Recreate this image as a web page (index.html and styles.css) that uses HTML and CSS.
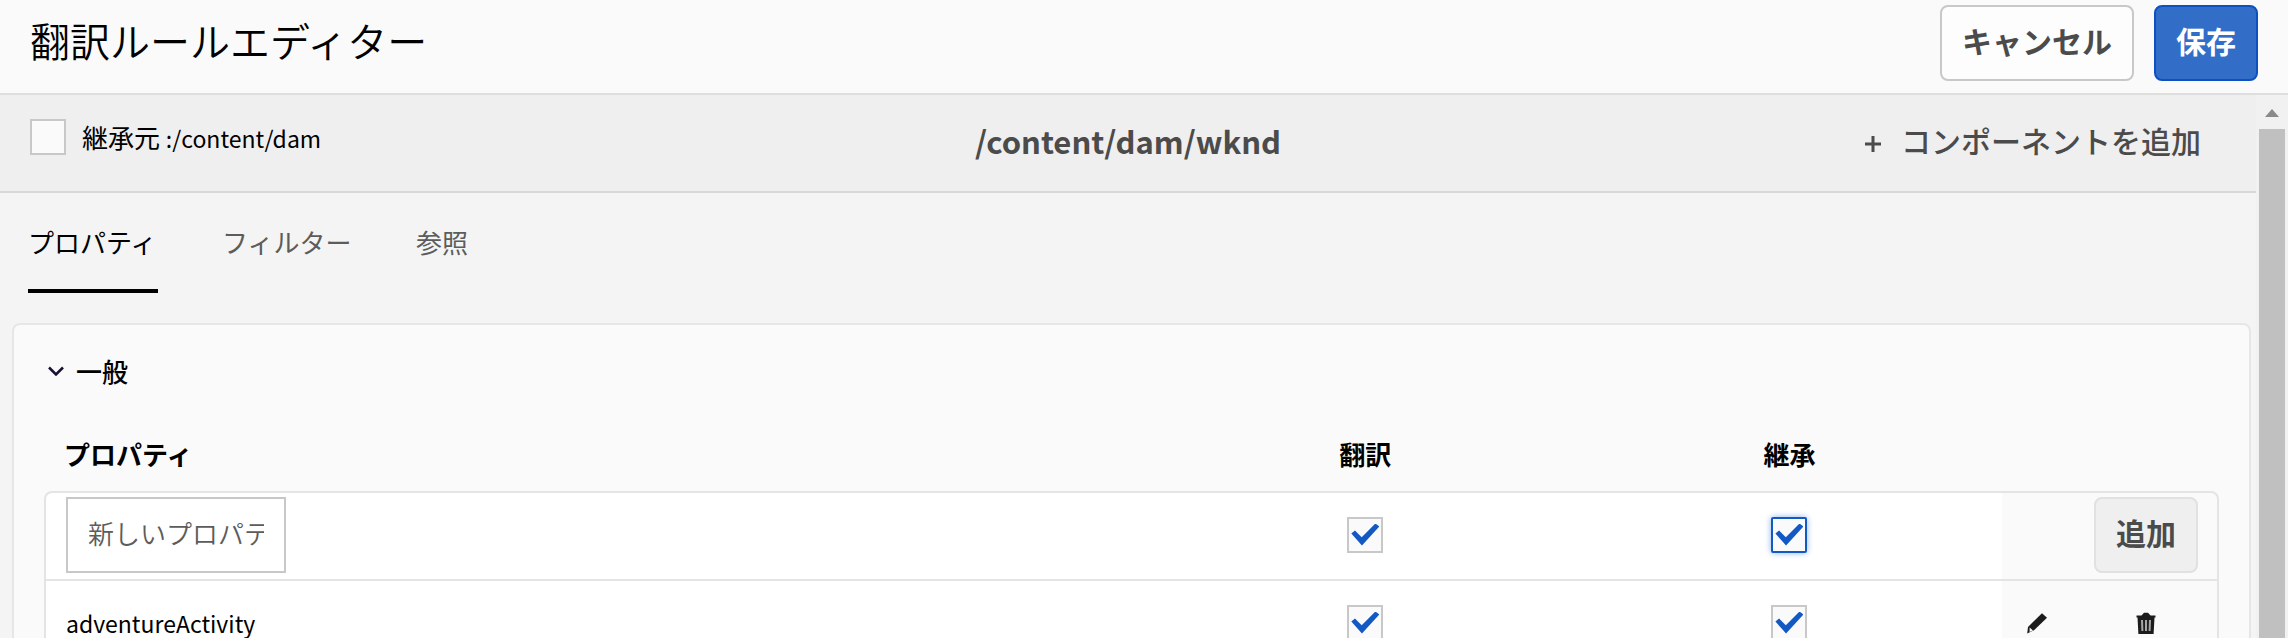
FILE: index.html
```
<!DOCTYPE html>
<html lang="ja">
<head>
<meta charset="utf-8">
<title>翻訳ルールエディター</title>
<link rel="stylesheet" href="styles.css">
</head>
<body>
<header class="topbar">
  <h1 class="title">翻訳ルールエディター</h1>
  <div class="actions">
    <button class="btn" type="button">キャンセル</button>
    <button class="btn btn-primary" type="button">保存</button>
  </div>
</header>
<div class="viewport">
  <main class="content">
    <div class="contextbar">
      <label class="inherit"><input class="check" type="checkbox"><span>継承元 <span class="latin">:/content/dam</span></span></label>
      <h2 class="path">/content/dam/wknd</h2>
      <button class="add-component" type="button">
        <svg class="plus" viewBox="0 0 16 16" aria-hidden="true"><path d="M8 0v16M0 8h16"/></svg>
        <span>コンポーネントを追加</span>
      </button>
    </div>
    <nav class="tabs">
      <a class="tab tab-active" href="#properties">プロパティ</a>
      <a class="tab" href="#filters">フィルター</a>
      <a class="tab" href="#references">参照</a>
    </nav>
    <section class="panel" id="properties">
      <button class="section-toggle" type="button" aria-expanded="true">
        <svg class="chevron" viewBox="0 0 16 10" aria-hidden="true"><path d="M1 1.5l7 7 7-7"/></svg>
        <span>一般</span>
      </button>
      <table class="rules">
        <colgroup><col class="col-name"><col class="col-flag"><col class="col-flag"><col class="col-edit"><col class="col-action"></colgroup>
        <thead>
          <tr><th class="name">プロパティ</th><th>翻訳</th><th>継承</th><th></th><th></th></tr>
        </thead>
        <tbody>
          <tr>
            <td class="name"><input class="field" type="text" placeholder="新しいプロパティ" aria-label="新しいプロパティ"></td>
            <td><input class="check" type="checkbox" checked aria-label="翻訳"></td>
            <td><input class="check check-focus" type="checkbox" checked aria-label="継承"></td>
            <td class="tool"></td>
            <td class="tool tool-last"><button class="btn btn-quiet" type="button">追加</button></td>
          </tr>
          <tr>
            <td class="name latin">adventureActivity</td>
            <td><input class="check" type="checkbox" checked aria-label="adventureActivity 翻訳"></td>
            <td><input class="check" type="checkbox" checked aria-label="adventureActivity 継承"></td>
            <td class="tool tool-edit">
              <button class="icon-btn" type="button" aria-label="編集">
                <svg class="icon" viewBox="0 0 22 22"><path d="M16 1.2l5 4.600L8 18.200 1.200 21.400 2 15z"/><path class="tip" d="M3.600 15.400l3.400 3-3.400 1.600z"/></svg>
              </button>
            </td>
            <td class="tool tool-last">
              <button class="icon-btn icon-wide" type="button" aria-label="削除">
                <svg class="icon" viewBox="0 0 22 22"><path d="M1.500 5.600V3.400h5L9 .8h4l2.500 2.600h5v2.200h-1L18.600 22H3.400L2.500 5.600z"/><path class="slots" d="M7 8l.4 11M11 8v11M15 8l-.4 11"/></svg>
              </button>
            </td>
          </tr>
        </tbody>
      </table>
    </section>
  </main>
  <div class="scrollbar" aria-hidden="true">
    <svg class="scroll-up" viewBox="0 0 14 8"><path d="M7 0l7 8H0z"/></svg>
    <div class="scroll-thumb"></div>
  </div>
</div>
</body>
</html>
```
FILE: styles.css
```
* { box-sizing: border-box; }
body {
  margin: 0;
  height: 100vh;
  overflow: hidden;
  display: flex;
  flex-direction: column;
  background: #f4f4f4;
  color: #000;
  font-family: "Noto Sans CJK JP", sans-serif;
  font-size: 26px;
  line-height: 36px;
}
button, input { font: inherit; color: inherit; margin: 0; }
button { cursor: pointer; }
.latin { font-size: 23px; line-height: 30px; }

.topbar {
  flex: none;
  display: flex;
  justify-content: space-between;
  align-items: flex-start;
  padding: 5px 30px 12px;
  background: #fafafa;
  border-bottom: 2px solid #dedede;
}
.title { margin: 0; font-size: 40px; font-weight: 350; line-height: 70px; }
.actions { display: flex; gap: 20px; }
.btn {
  height: 76px;
  padding: 0 20px 6px;
  border: 2px solid #c8c8c8;
  border-radius: 8px;
  background: #fdfdfd;
  color: #4b4b4b;
  font-size: 30px;
  font-weight: 700;
  line-height: 40px;
  white-space: nowrap;
}
.btn-primary { background: #326ec8; border-color: #0d51c0; color: #fff; }
.btn-quiet { display: block; margin-left: auto; background: #efefef; border-color: #e1e1e1; }

.viewport { flex: 1; min-height: 0; display: flex; overflow: hidden; }
.content { flex: 1; min-width: 0; }
.contextbar {
  display: grid;
  grid-template-columns: 1fr auto 1fr;
  align-items: start;
  height: 98px;
  padding: 24px 30px 0;
  background: #efefef;
  border-bottom: 2px solid #d8d8d8;
}
.inherit { display: flex; align-items: center; gap: 16px; }
.path { margin: 0; padding-top: 2px; font-size: 31px; line-height: 40px; font-weight: 700; color: #4b4b4b; }
.add-component {
  justify-self: end;
  display: flex;
  align-items: center;
  gap: 20px;
  margin-right: 25px;
  padding: 0;
  border: 0;
  background: none;
  color: #4b4b4b;
  font-size: 30px;
  font-weight: 500;
  line-height: 42px;
}
.plus { width: 16px; height: 16px; margin-top: 8px; stroke: #4b4b4b; stroke-width: 3; }

.tabs { display: flex; gap: 64px; padding: 23px 28px 0; }
.tab { height: 77px; min-width: 130px; padding-top: 8px; color: #5c5c5c; text-decoration: none; }
.tab-active { color: #000; border-bottom: 4px solid #000; }

.panel {
  margin: 30px 5px 0 12px;
  padding: 0 30px;
  border: 2px solid #e6e6e6;
  border-radius: 8px;
  background: #fafafa;
}
.section-toggle {
  display: flex;
  align-items: center;
  gap: 12px;
  height: 95px;
  padding: 0 0 4px 4px;
  border: 0;
  background: none;
  font-weight: 500;
}
.chevron { width: 16px; height: 10px; fill: none; stroke: #1b1030; stroke-width: 2.5; }

.rules { width: 100%; table-layout: fixed; border-collapse: separate; border-spacing: 0; }
.col-name { width: 51%; }
.col-flag { width: 19.5%; }
.col-edit { width: 4%; }
.col-action { width: 6%; }
th { height: 71px; padding: 0 0 4px; font-weight: 700; }
td { height: 88px; padding: 0 0 3px; text-align: center; background: #fff; border-bottom: 2px solid #e4e4e4; }
tbody tr:first-child td { height: 90px; border-top: 2px solid #e4e4e4; }
tbody tr:first-child td:first-child { border-top-left-radius: 8px; }
tbody tr:first-child td:last-child { border-top-right-radius: 8px; }
td:first-child { border-left: 2px solid #e4e4e4; }
td:last-child { border-right: 2px solid #e4e4e4; }
.name { padding-left: 20px; text-align: left; }
td.tool { background: #fafafa; }
td.tool-last { padding-right: 19px; }
td.tool-edit { padding-left: 24px; }

.field {
  display: block;
  width: 220px;
  height: 76px;
  padding: 0 20px 4px;
  border: 2px solid #c8c8c8;
  background: #fff;
}
.field::placeholder { color: #5c5c5c; opacity: 1; font-weight: 350; }

.check {
  appearance: none;
  display: grid;
  place-items: center;
  flex: none;
  width: 36px;
  height: 36px;
  border: 2px solid #c8c8c8;
  background: #fafafa;
}
td .check { margin: 0 auto; }
.check:checked::before {
  content: "";
  width: 28px;
  height: 22px;
  background: #1259c3;
  clip-path: polygon(0 46%, 13% 32%, 37% 62%, 86% 0, 100% 14%, 38% 100%);
}
.check-focus { border-color: #1259c3; border-radius: 2px; box-shadow: 0 0 6px #8fb2ea; }

.icon-btn { display: flex; justify-content: center; padding: 0; border: 0; background: none; }
.icon-wide { width: 104px; margin-left: auto; }
.icon { width: 22px; height: 22px; fill: #1c1c1c; }
.tip { fill: #fafafa; }
.slots { stroke: #a5a5a5; stroke-width: 2; }

.scrollbar {
  flex: none;
  display: flex;
  flex-direction: column;
  align-items: center;
  gap: 12px;
  width: 32px;
  padding-top: 14px;
  background: #f1f1f1;
}
.scroll-up { width: 14px; height: 8px; fill: #8a8a8a; }
.scroll-thumb { flex: 1; width: 26px; background: #c0c0c0; }
```
